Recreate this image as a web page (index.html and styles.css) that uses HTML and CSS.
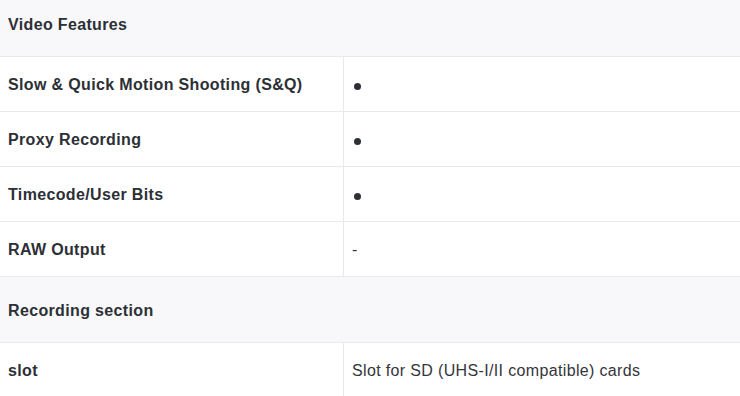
FILE: index.html
```html
<!DOCTYPE html>
<html lang="en">
<head>
    <meta charset="UTF-8">
    <meta name="viewport" content="width=device-width, initial-scale=1.0">
    <title>Specifications</title>
    <link rel="stylesheet" href="styles.css">
</head>
<body>

<table class="spec-table">
    <tr class="spec-group">
        <th colspan="2">Video Features</th>
    </tr>
    <tr>
        <td class="spec-name">Slow &amp; Quick Motion Shooting (S&amp;Q)</td>
        <td class="spec-value"><span class="dot"></span></td>
    </tr>
    <tr>
        <td class="spec-name">Proxy Recording</td>
        <td class="spec-value"><span class="dot"></span></td>
    </tr>
    <tr>
        <td class="spec-name">Timecode/User Bits</td>
        <td class="spec-value"><span class="dot"></span></td>
    </tr>
    <tr>
        <td class="spec-name">RAW Output</td>
        <td class="spec-value">-</td>
    </tr>
    <tr class="spec-group">
        <th colspan="2">Recording section</th>
    </tr>
    <tr>
        <td class="spec-name">slot</td>
        <td class="spec-value">Slot for SD (UHS-I/II compatible) cards</td>
    </tr>
</table>

</body>
</html>
```

FILE: styles.css
```css
:root {
    --line-color: #e9e9ed;
    --group-bg: #f8f8fa;
    --text-color: #2c3036;
}
body {
    margin: 0;
    font-family: "Liberation Sans", Arial, sans-serif;
    font-size: 16px;
    letter-spacing: 0.35px;
    color: var(--text-color);
    background: #fff;
}
.spec-table {
    width: 100%;
    border-collapse: collapse;
    margin-top: -9px;
}
.spec-table th,
.spec-table td {
    text-align: left;
    vertical-align: middle;
    padding: 2px 9px 0 8px;
    border-bottom: 1px solid var(--line-color);
}
.spec-group th {
    height: 63px;
    background-color: var(--group-bg);
    font-weight: bold;
}
.spec-table td {
    height: 52px;
}
.spec-name {
    width: 326px;
    font-weight: bold;
    border-right: 1px solid var(--line-color);
}
.spec-value {
    padding-left: 9px;
    color: #33363b;
}
/* filled marker for supported features */
.dot {
    display: inline-block;
    width: 7px;
    height: 7px;
    margin-left: 2px;
    border-radius: 50%;
    background-color: var(--text-color);
    vertical-align: middle;
    position: relative;
    top: 1px;
}
```
